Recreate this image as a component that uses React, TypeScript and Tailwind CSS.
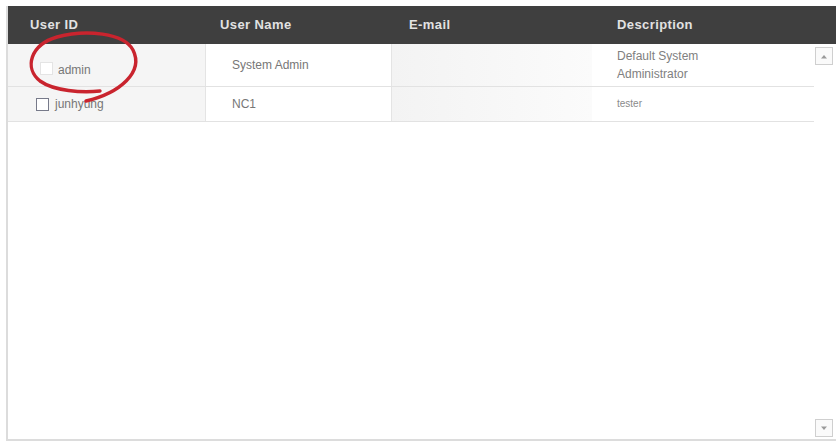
import React from 'react';

interface UserRow {
  id: string;
  name: string;
  email: string;
  description: string[];
  faintBox?: boolean;
}

const users: UserRow[] = [
  { id: 'admin', name: 'System Admin', email: '', description: ['Default System', 'Administrator'], faintBox: true },
  { id: 'junhyung', name: 'NC1', email: '', description: ['tester'] },
];

const cols = 'grid grid-cols-[197px_187px_200px_222px]';

const ScrollButton: React.FC<{ dir: 'up' | 'down' }> = ({ dir }) => (
  <div className="w-[18px] h-[18px] border border-[#cfcfcf] bg-[#fafafa] flex items-center justify-center">
    <svg width="8" height="5" viewBox="0 0 8 5">
      {dir === 'up' ? (
        <path d="M1 4.5 L4 1 L7 4.5 Z" fill="#9a9a9a" />
      ) : (
        <path d="M1 0.5 L4 4 L7 0.5 Z" fill="#9a9a9a" />
      )}
    </svg>
  </div>
);

export default function App() {
  return (
    <div className="w-[837px] h-[443px] bg-white pt-[6px] pl-[6px] font-['Liberation_Sans',Arial,sans-serif]">
      <div className="relative w-[830px] h-[435px] border-l-2 border-b-2 border-[#dcdcdc] flex flex-col">
        {/* header */}
        <div className={`${cols} h-[38px] bg-[#3f3f3f] text-[13px] font-bold text-[#e2e2e2] items-center tracking-[0.4px]`}>
          <div className="pl-[22px]">User ID</div>
          <div className="pl-[15px]">User Name</div>
          <div className="pl-[17px]">E-mail</div>
          <div className="pl-[25px]">Description</div>
        </div>

        <div className="flex flex-1">
          {/* rows */}
          <div className="w-[806px] flex flex-col text-[12px] text-[#777777]">
            {users.map((u, i) => (
              <div
                key={u.id}
                className={`${cols} border-b border-[#e2e2e2] ${i === 0 ? 'h-[43px]' : 'h-[35px]'}`}
              >
                <div className={`bg-[#f5f5f5] flex items-center ${i === 0 ? 'pl-[32px] gap-[5px]' : 'pl-[28px] gap-[6px]'}`}>
                  <span
                    className={`w-[13px] h-[13px] border ${u.faintBox ? 'border-[#e4e4e4] bg-white' : 'border-[#777a8a] bg-white'} ${i === 0 ? 'mt-[6px]' : ''}`}
                  />
                  <span className={i === 0 ? 'mt-[9px]' : ''}>{u.id}</span>
                </div>
                <div className="bg-white border-x border-[#e4e4e4] flex items-center pl-[26px] pb-[1px]">
                  {u.name}
                </div>
                <div className="bg-gradient-to-r from-[#f3f3f3] to-[#fbfbfb] flex items-center pl-[17px]">
                  {u.email}
                </div>
                <div className="bg-white flex flex-col justify-center pl-[25px] text-[12px] leading-[18px] text-[#808080]">
                  {u.description.map((line) => (
                    <span key={line} className={u.description.length === 1 ? 'text-[10px] text-[#8a8a8a]' : ''}>
                      {line}
                    </span>
                  ))}
                </div>
              </div>
            ))}
          </div>

          {/* scrollbar */}
          <div className="flex-1 flex flex-col justify-between items-center pt-[3px] pb-[2px] pr-[2px]">
            <ScrollButton dir="up" />
            <ScrollButton dir="down" />
          </div>
        </div>

        {/* hand-drawn red mark around the admin account */}
        <svg className="absolute left-[-6px] top-[-6px] pointer-events-none" width="160" height="110" viewBox="0 0 160 110">
          <path
            d="M84 101 C118 93 142 72 131 50 C122 33 84 29 55 37 C28 45 22 68 38 81 C52 91 80 93 98 91"
            fill="none"
            stroke="#c9242e"
            strokeWidth="3.4"
            strokeLinecap="round"
          />
        </svg>
      </div>
    </div>
  );
}
